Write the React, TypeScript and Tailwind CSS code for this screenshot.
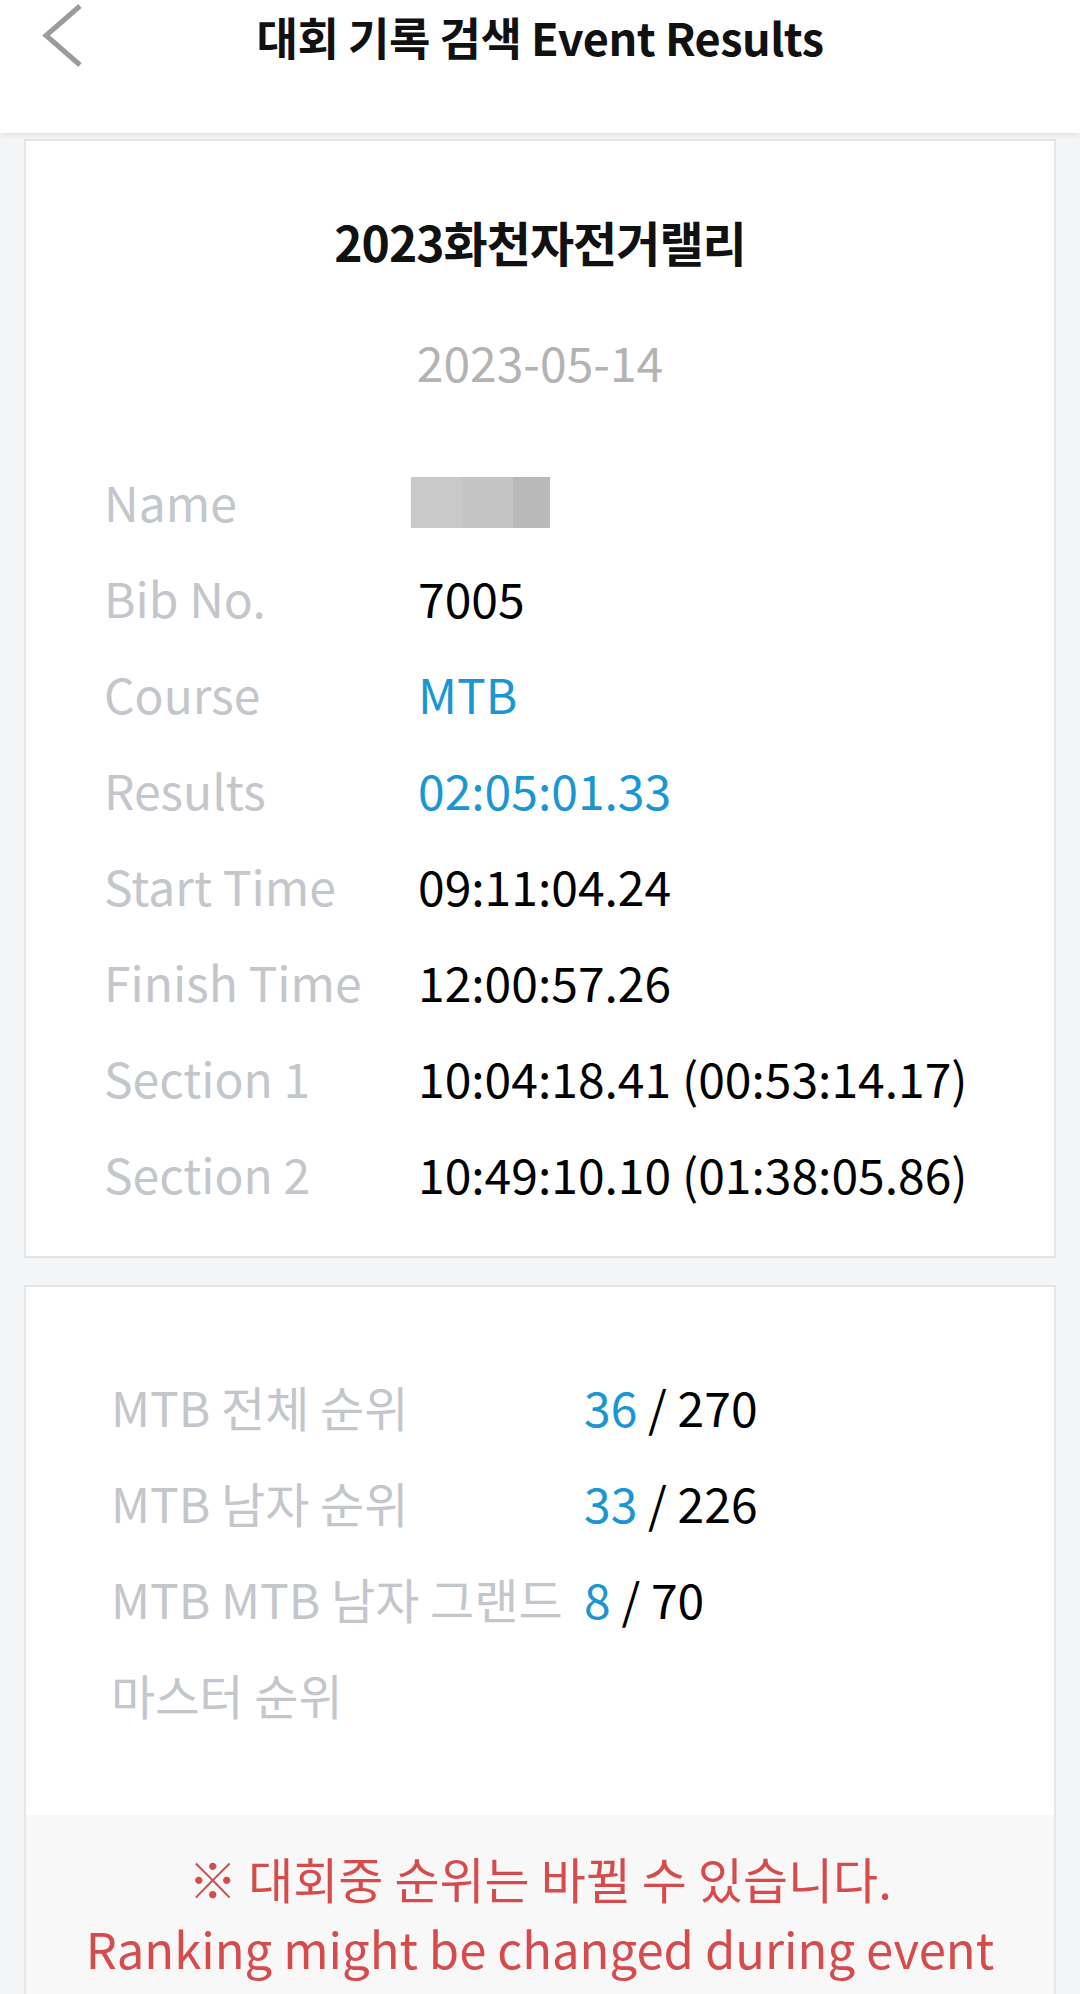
const font = { fontFamily: '"Noto Sans CJK KR", "Noto Sans", sans-serif' };

type Row = { label: string; value: React.ReactNode };

function BackIcon() {
  return (
    <svg className="absolute left-[40px] top-[2px]" width="46" height="68" viewBox="0 0 46 68" fill="none">
      <path d="M40 4 L6 33.5 L40 63" stroke="#9b9b9b" strokeWidth="5" strokeLinejoin="miter" />
    </svg>
  );
}

function NameMask() {
  return (
    <div className="flex h-[51px] mt-[2px] -ml-[7px]">
      <div className="w-[51px] bg-[#c9c9c9]" />
      <div className="w-[51px] bg-[#c4c4c4]" />
      <div className="w-[37px] bg-[#b9b9b9]" />
    </div>
  );
}

const detailRows: Row[] = [
  { label: "Name", value: <NameMask /> },
  { label: "Bib No.", value: <span className="text-black">7005</span> },
  { label: "Course", value: <span className="text-[#1a96d4]">MTB</span> },
  { label: "Results", value: <span className="text-[#1a96d4]">02:05:01.33</span> },
  { label: "Start Time", value: <span className="text-black">09:11:04.24</span> },
  { label: "Finish Time", value: <span className="text-black">12:00:57.26</span> },
  { label: "Section 1", value: <span className="text-black">10:04:18.41 (00:53:14.17)</span> },
  { label: "Section 2", value: <span className="text-black">10:49:10.10 (01:38:05.86)</span> },
];

const rankRows = [
  { label: "MTB 전체 순위", rank: "36", total: "270" },
  { label: "MTB 남자 순위", rank: "33", total: "226" },
  { label: "MTB MTB 남자 그랜드", rank: "8", total: "70" },
  { label: "마스터 순위", rank: "", total: "" },
];

export default function App() {
  return (
    <div className="w-[1080px] h-[1994px] overflow-hidden bg-[#f4f5f7]" style={font}>
      {/* 헤더 */}
      <header className="relative h-[133px] bg-white shadow-[0_2px_6px_rgba(0,0,0,0.08)] z-10">
        <BackIcon />
        <div className="h-[74px] flex items-center justify-center text-[45px] font-bold text-[#111] tracking-[-0.5px]">
          대회 기록 검색 Event Results
        </div>
      </header>

      {/* 기록 카드 */}
      <div className="mx-[24px] mt-[6px] bg-white border-2 border-[#e3e5e8]">
        <div className="pt-[70px] text-center">
          <div className="text-[48px] leading-[60px] font-bold text-[#111] tracking-[-1px]">2023화천자전거랠리</div>
          <div className="mt-[60px] text-[48px] leading-[60px] text-[#b3b3b3]">2023-05-14</div>
        </div>
        <div className="mt-[62px] pb-[35px] pl-[78px]">
          {detailRows.map((r) => (
            <div key={r.label} className="flex items-center h-[96px] text-[48px] leading-[96px]">
              <div className="w-[314px] text-[#c3c6cb]">{r.label}</div>
              <div>{r.value}</div>
            </div>
          ))}
        </div>
      </div>

      {/* 순위 카드 */}
      <div className="mx-[24px] mt-[27px] bg-white border-2 border-[#e3e5e8] h-[800px]">
        <div className="pt-[71px] pl-[85px]">
          {rankRows.map((r) => (
            <div key={r.label} className="flex items-center h-[96px] text-[48px] leading-[96px]">
              <div className="w-[473px] text-[#c3c6cb] whitespace-nowrap">{r.label}</div>
              {r.rank && (
                <div>
                  <span className="text-[#1a96d4]">{r.rank}</span>
                  <span className="text-black"> / {r.total}</span>
                </div>
              )}
            </div>
          ))}
        </div>
        <div className="mt-[73px] bg-[#f8f8f8] pt-[28px] pb-[40px] text-center text-[49px] leading-[70px] text-[#d64b4b]">
          <div>※ 대회중 순위는 바뀔 수 있습니다.</div>
          <div>Ranking might be changed during event</div>
        </div>
      </div>
    </div>
  );
}
